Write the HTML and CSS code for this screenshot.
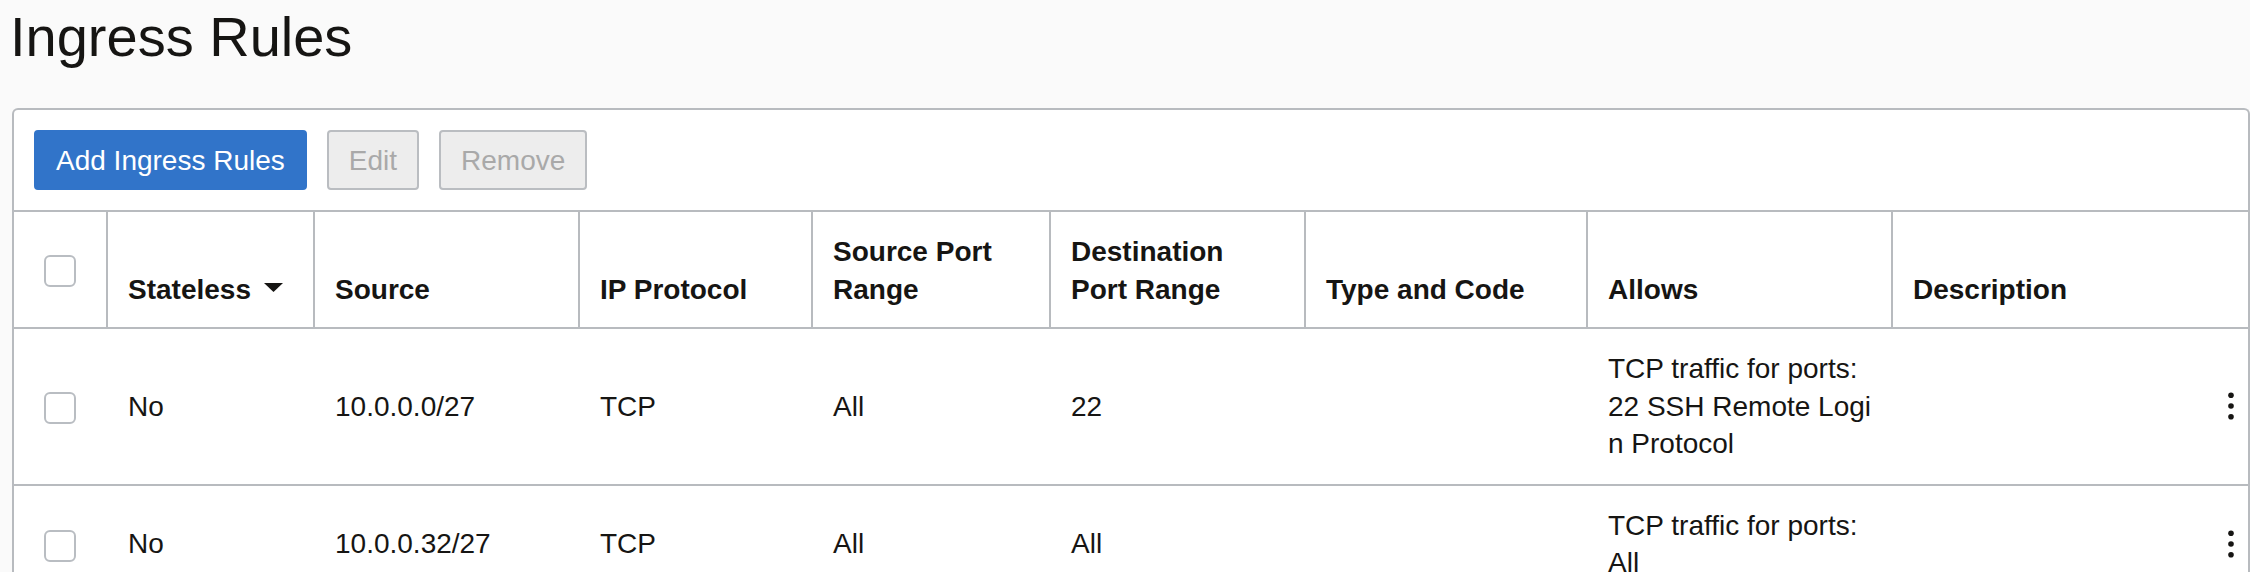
FILE: index.html
```html
<!DOCTYPE html>
<html lang="en">
<head>
<meta charset="utf-8">
<title>Ingress Rules</title>
<link rel="stylesheet" href="styles.css">
</head>
<body>
<h1 class="page-title">Ingress Rules</h1>
<div class="card">
  <div class="toolbar">
    <button class="btn btn-primary" type="button">Add Ingress Rules</button>
    <button class="btn btn-disabled" type="button" disabled>Edit</button>
    <button class="btn btn-disabled" type="button" disabled>Remove</button>
  </div>
  <table class="rules">
    <colgroup>
      <col class="col-check">
      <col class="col-stateless">
      <col class="col-source">
      <col class="col-proto">
      <col class="col-sport">
      <col class="col-dport">
      <col class="col-type">
      <col class="col-allows">
      <col class="col-desc">
      <col class="col-actions">
    </colgroup>
    <thead>
      <tr>
        <th class="cell-check"><span class="checkbox"></span></th>
        <th class="th-sort">Stateless<svg class="sort-arrow" width="19" height="9" viewBox="0 0 19 9"><polygon points="0,0 19,0 9.5,9" fill="#161513"/></svg></th>
        <th>Source</th>
        <th>IP Protocol</th>
        <th>Source Port Range</th>
        <th class="th-dest">Destination Port Range</th>
        <th>Type and Code</th>
        <th>Allows</th>
        <th>Description</th>
        <th class="cell-actions"></th>
      </tr>
    </thead>
    <tbody>
      <tr>
        <td class="cell-check"><span class="checkbox"></span></td>
        <td>No</td>
        <td>10.0.0.0/27</td>
        <td>TCP</td>
        <td>All</td>
        <td>22</td>
        <td></td>
        <td class="wrap">TCP traffic for ports: 22 SSH Remote Login Protocol</td>
        <td></td>
        <td class="cell-actions"><svg class="kebab" width="6" height="28" viewBox="0 0 6 28"><circle cx="3" cy="3.2" r="2.8"/><circle cx="3" cy="14" r="2.8"/><circle cx="3" cy="24.8" r="2.8"/></svg></td>
      </tr>
      <tr>
        <td class="cell-check"><span class="checkbox"></span></td>
        <td>No</td>
        <td>10.0.0.32/27</td>
        <td>TCP</td>
        <td>All</td>
        <td>All</td>
        <td></td>
        <td class="wrap">TCP traffic for ports: All</td>
        <td></td>
        <td class="cell-actions"><svg class="kebab" width="6" height="28" viewBox="0 0 6 28"><circle cx="3" cy="3.2" r="2.8"/><circle cx="3" cy="14" r="2.8"/><circle cx="3" cy="24.8" r="2.8"/></svg></td>
      </tr>
    </tbody>
  </table>
</div>
</body>
</html>
```

FILE: styles.css
```css
* {
  box-sizing: border-box;
}

html,
body {
  margin: 0;
  background: #fafafa;
}

body {
  width: 2250px;
  overflow: hidden;
  font-family: "Liberation Sans", Arial, sans-serif;
  color: #161513;
}

.page-title {
  margin: 0;
  padding: 5px 0 0 10px;
  font-size: 56px;
  line-height: 64px;
  font-weight: 400;
  color: #161513;
}

.card {
  margin: 39px 0 0 12px;
  background: #ffffff;
  border: 2px solid #b8bbbf;
  border-bottom: none;
  border-radius: 6px 6px 0 0;
}

.toolbar {
  display: flex;
  gap: 20px;
  padding: 20px;
}

.btn {
  height: 60px;
  padding: 2px 20px 0;
  border: 2px solid;
  border-radius: 4px;
  font-family: "Liberation Sans", Arial, sans-serif;
  font-size: 28px;
  line-height: 54px;
}

.btn-primary {
  background: #3174c9;
  border-color: #3174c9;
  color: #ffffff;
}

.btn-disabled {
  background: #ededed;
  border-color: #babdc1;
  color: #a9a9a9;
}

.rules {
  width: 100%;
  table-layout: fixed;
  border-collapse: separate;
  border-spacing: 0;
  font-size: 28px;
  line-height: 37.5px;
}

.col-check { width: 92px; }
.col-stateless { width: 207px; }
.col-source { width: 265px; }
.col-proto { width: 233px; }
.col-sport { width: 238px; }
.col-dport { width: 255px; }
.col-type { width: 282px; }
.col-allows { width: 305px; }
.col-desc { width: 323px; }
.col-actions { width: 34px; }

.rules th {
  border-top: 2px solid #b8bbbf;
  border-left: 2px solid #b8bbbf;
  padding: 21px 14px 19px 20px;
  text-align: left;
  vertical-align: bottom;
  font-weight: 700;
}

.rules th.th-sort {
  white-space: nowrap;
}

.rules th.th-dest {
  padding-right: 40px;
}

.rules th.cell-check,
.rules th.cell-actions {
  border-left: none;
}

.rules td {
  border-top: 2px solid #b8bbbf;
  padding: 21px 14px 21px 22px;
  vertical-align: middle;
}

.rules .cell-check {
  padding: 0;
  text-align: center;
  vertical-align: middle;
}

.rules .cell-actions {
  padding: 0;
  text-align: center;
}

.wrap {
  word-break: break-all;
}

.checkbox {
  display: inline-block;
  width: 32px;
  height: 32px;
  border: 2px solid #b9bdc2;
  border-radius: 6px;
  background: #ffffff;
  vertical-align: middle;
}

.sort-arrow {
  margin-left: 13px;
  vertical-align: 7px;
}

.kebab {
  display: block;
  margin: 0 auto;
  fill: #161513;
}
```
